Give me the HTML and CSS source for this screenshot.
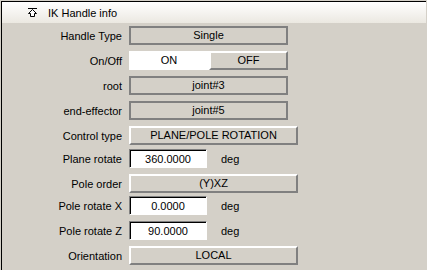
FILE: index.html
```html
<!DOCTYPE html>
<html lang="en">
<head>
<meta charset="UTF-8">
<title>IK Handle info</title>
<link rel="stylesheet" href="styles.css">
</head>
<body>
<div class="frame">
    <div class="header">
        <svg class="collapse-icon" width="9" height="9" viewBox="0 0 9 9">
            <path d="M0 0.5 H9" stroke="#000" fill="none"/>
            <path d="M4.5 1.5 L0.5 5.5 H2.5 V8.5 H6.5 V5.5 H8.5 Z" stroke="#000" fill="#fff"/>
        </svg>
        <span>IK Handle info</span>
    </div>
    <div class="rows">
        <div class="row">
            <label>Handle Type</label>
            <div class="field">Single</div>
        </div>
        <div class="row">
            <label>On/Off</label>
            <div class="toggle">
                <span class="on">ON</span>
                <span class="off">OFF</span>
            </div>
        </div>
        <div class="row">
            <label>root</label>
            <div class="field">joint#3</div>
        </div>
        <div class="row">
            <label>end-effector</label>
            <div class="field">joint#5</div>
        </div>
        <div class="row">
            <label>Control type</label>
            <div class="button wide">PLANE/POLE ROTATION</div>
        </div>
        <div class="row tight">
            <label>Plane rotate</label>
            <div class="value">
                <input type="text" value="360.0000">
                <span class="unit">deg</span>
            </div>
        </div>
        <div class="row">
            <label>Pole order</label>
            <div class="button wide">(Y)XZ</div>
        </div>
        <div class="row tighter">
            <label>Pole rotate X</label>
            <div class="value">
                <input type="text" value="0.0000">
                <span class="unit">deg</span>
            </div>
        </div>
        <div class="row">
            <label>Pole rotate Z</label>
            <div class="value">
                <input type="text" value="90.0000">
                <span class="unit">deg</span>
            </div>
        </div>
        <div class="row">
            <label>Orientation</label>
            <div class="button wide">LOCAL</div>
        </div>
    </div>
</div>
</body>
</html>
```
FILE: styles.css
```css
html, body {
    margin: 0;
    padding: 0;
    height: 270px;
    overflow: hidden;
    background-color: #d4d0c8;
}
body {
    font-family: "Liberation Sans", Arial, sans-serif;
    font-size: 11px;
    color: #000;
}
.frame {
    margin: 1px 1px 0 1px;
    border-top: 1px solid #000;
    border-left: 1px solid #000;
    height: 269px;
}
.header {
    height: 21px;
    display: flex;
    align-items: center;
    padding-left: 26px;
    background: linear-gradient(#ffffff, #ebe8e1);
}
.collapse-icon {
    margin-right: 11px;
}
.rows {
    display: flex;
    flex-direction: column;
    padding-top: 3px;
}
.row {
    display: grid;
    grid-template-columns: 120px auto;
    column-gap: 7px;
    align-items: center;
    height: 19px;
    margin-top: 6px;
}
.row:first-child {
    margin-top: 0;
}
.row.tight {
    margin-top: 4px;
}
.row.tighter {
    margin-top: 3px;
}
label {
    text-align: right;
    white-space: nowrap;
}
.field,
.button,
.toggle span {
    box-sizing: border-box;
    height: 19px;
    line-height: 15px;
    text-align: center;
}
.field {
    width: 159px;
    border: 2px solid #808080;
}
.toggle {
    display: flex;
    width: 159px;
}
.toggle .on {
    width: 80px;
    background-color: #fff;
    border: 2px solid #fff;
}
.toggle .off {
    width: 79px;
}
.button,
.toggle .off {
    border-top: 2px solid #fff;
    border-left: 2px solid #fff;
    border-right: 2px solid #808080;
    border-bottom: 2px solid #808080;
}
.button.wide {
    width: 169px;
}
.value {
    display: flex;
    align-items: center;
}
.value input {
    box-sizing: border-box;
    width: 78px;
    height: 19px;
    margin: 0;
    padding: 0;
    font-family: inherit;
    font-size: 11px;
    text-align: center;
    background-color: #fff;
    border-top: 1px solid #808080;
    border-left: 1px solid #808080;
    border-right: 1px solid #fff;
    border-bottom: 1px solid #fff;
    box-shadow: inset 1px 1px 0 #000;
    outline: none;
}
.unit {
    margin-left: 14px;
}
```
